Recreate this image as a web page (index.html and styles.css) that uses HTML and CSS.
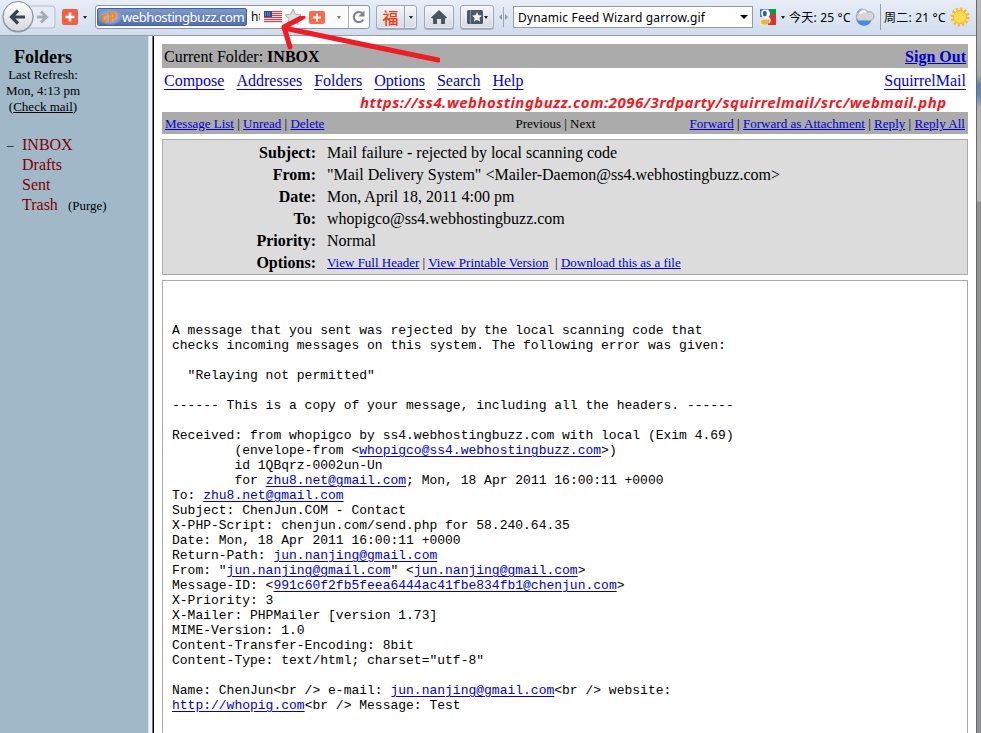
FILE: index.html
```html
<!DOCTYPE html>
<html lang="en">
<head>
<meta charset="utf-8">
<title>SquirrelMail</title>
<link rel="stylesheet" href="styles.css">
</head>
<body>
<div class="window">
<header class="toolbar">
  <svg class="nav" width="57" height="35" viewBox="0 0 57 35">
    <defs><linearGradient id="g" x1="0" y1="0" x2="0" y2="1"><stop offset="0" stop-color="#fff"/><stop offset="1" stop-color="#d3d7df"/></linearGradient></defs>
    <rect x="25" y="6" width="30" height="22" rx="3" fill="#e5ebf4" stroke="#b5bdca"/>
    <path d="M37 17h9M41 11.500l5.500 5.500-5.500 5.500" fill="none" stroke="#a4aebb" stroke-width="3"/>
    <circle cx="18" cy="17" r="15.500" fill="#50555c" opacity=".5"/>
    <circle cx="18" cy="16.500" r="15" fill="url(#g)" stroke="#858c97"/>
    <path d="M12 17h13M18 10.500L11.500 17l6.500 6.500" fill="none" stroke="#38444e" stroke-width="3.200"/>
  </svg>
  <svg class="plus" width="16" height="16" viewBox="0 0 16 16"><rect width="16" height="16" rx="2" fill="#f35f43"/><path d="M8 3.500v9M3.500 8h9" stroke="#fff" stroke-width="2.500"/></svg>
  <i class="caret c1"></i>
  <div class="url">
    <div class="identity"><b>cP</b><span>webhostingbuzz.com</span></div>
    <span class="ht">ht</span>
    <svg class="flag" width="18" height="12" viewBox="0 0 18 12"><rect width="18" height="12" fill="#f5dede"/><path d="M0 .5h18M0 2.500h18M0 4.500h18M0 6.500h18M0 8.500h18M0 10.500h18" stroke="#cf414b"/><rect width="8" height="6" fill="#2c4ba6"/><path d="M1 2h6M1 4h6" stroke="#9aace0" stroke-dasharray="1 1"/></svg>
    <svg class="star" width="18" height="18" viewBox="0 0 18 18"><path d="M9 1l2.400 5.200 5.600.6-4.100 3.900 1.100 5.800L9 13.700l-5 2.800 1.100-5.800L1 6.800l5.600-.6z" fill="#e2e2e2" stroke="#aaa"/></svg>
    <svg class="plus2" width="16" height="13" viewBox="0 0 16 13"><rect width="16" height="13" rx="2" fill="#fc6a49"/><path d="M8 2.500v8M4 6.500h8" stroke="#fff" stroke-width="2"/></svg>
    <i class="caret c2"></i>
    <div class="reload"><svg width="14" height="14" viewBox="0 0 14 14"><path d="M11.200 9.500A5 5 0 1 1 10 3.200" fill="none" stroke="#7b838d" stroke-width="2"/><path d="M12.500.5v6h-6z" fill="#7b838d"/></svg></div>
  </div>
  <div class="btn fu"><span>福</span><div class="drop"><i class="caret"></i></div></div>
  <div class="btn home"><svg width="16" height="14" viewBox="0 0 16 14"><path d="M8 0l8 7.500-1.200 1.200L14 8v6h-4V9H6v5H2V8l-.8.700L0 7.500z" fill="#4b565f"/></svg></div>
  <div class="btn marks"><svg width="16" height="14" viewBox="0 0 16 14"><rect width="16" height="14" rx="1.500" fill="#4b5865"/><path d="M3.500 0v14" stroke="#82909b"/><path d="M10 2l1.500 3.200 3.400.4-2.500 2.300.7 3.600-3.100-1.800-3 1.800.7-3.600-2.600-2.300 3.400-.4z" fill="#fff"/></svg><i class="caret"></i></div>
  <svg class="split" width="9" height="20" viewBox="0 0 9 20"><path d="M4.500 0v20" stroke="#a0a6b0"/><path d="M3 7v6L0 10zM6 7v6l3-3z" fill="#8f98a4"/></svg>
  <div class="select"><span>Dynamic Feed Wizard garrow.gif</span><i class="caret big"></i></div>
  <svg class="google" width="16" height="16" viewBox="0 0 16 16"><path fill="#3f78dc" d="M0 0h9v9H0z"/><path fill="#0a9b40" d="M9 0h7v6H9z"/><path fill="#e42e2b" d="M8 6l8-1v11H8z"/><path fill="#dfe8f8" d="M0 8h8v8H0z"/><path d="M7 1q4 4 0 7q4 2 2 6" fill="none" stroke="#fff" stroke-width="2"/><ellipse cx="5" cy="4.500" rx="3.800" ry="4" fill="#fff"/><ellipse cx="4.800" cy="4.500" rx="2" ry="2.700" fill="#235ac3"/><ellipse cx="5" cy="13" rx="4" ry="2.500" fill="#f9b718"/></svg>
  <i class="caret c3"></i>
  <span class="weather today">今天: 25 °C</span>
  <svg class="cloud" width="20" height="20" viewBox="0 0 20 20"><circle cx="9" cy="11" r="7.800" fill="#3f8bee"/><path d="M8 1Q2 2 1 8q2-4 7-7z" fill="#6ba2e9"/><path d="M3.500 13.500a4 4 0 0 1-.5-7 5.500 5 0 0 1 10-1.500 4.400 4.400 0 0 1 3 8.500z" fill="#d4d5d7" stroke="#a3a6aa"/><path d="M5 7q2-4 6-2" stroke="#f7f7f7" stroke-width="2" fill="none"/></svg>
  <i class="divider"></i>
  <span class="weather tuesday">周二: 21 °C</span>
  <svg class="sun" width="20" height="20" viewBox="0 0 20 20"><circle cx="10" cy="10" r="7.800" fill="none" stroke="#f5b929" stroke-width="3.500" stroke-dasharray="2 2.084"/><circle cx="10" cy="10" r="6.500" fill="#ffdc4e" stroke="#f3b22b"/></svg>
</header>
<div class="frames">
  <aside class="sidebar">
    <div class="summary">
      <h2>Folders</h2>
      <p>Last Refresh:<br>Mon, 4:13 pm<br>(<u>Check mail</u>)</p>
    </div>
    <ul>
      <li><span class="dash">–</span>INBOX</li><li>Drafts</li><li>Sent</li><li>Trash <small>(Purge)</small></li>
    </ul>
  </aside>
  <main>
    <div class="bar current"><span>Current Folder: <b>INBOX</b></span><a class="out">Sign Out</a></div>
    <nav><a>Compose</a><a>Addresses</a><a>Folders</a><a>Options</a><a>Search</a><a>Help</a><a class="brand">SquirrelMail</a></nav>
    <div class="bar actions"><span><a>Message List</a> | <a>Unread</a> | <a>Delete</a></span><span class="pager">Previous | Next</span><span class="right"><a>Forward</a> | <a>Forward as Attachment</a> | <a>Reply</a> | <a>Reply All</a></span></div>
    <dl class="headers">
      <dt>Subject:</dt><dd>Mail failure - rejected by local scanning code</dd>
      <dt>From:</dt><dd>"Mail Delivery System" &lt;Mailer-Daemon@ss4.webhostingbuzz.com&gt;</dd>
      <dt>Date:</dt><dd>Mon, April 18, 2011 4:00 pm</dd>
      <dt>To:</dt><dd>whopigco@ss4.webhostingbuzz.com</dd>
      <dt>Priority:</dt><dd>Normal</dd>
      <dt>Options:</dt><dd class="small"><a>View Full Header</a> | <a>View Printable Version</a> &nbsp;| <a>Download this as a file</a></dd>
    </dl>
<pre class="message">A message that you sent was rejected by the local scanning code that
checks incoming messages on this system. The following error was given:

  "Relaying not permitted"

------ This is a copy of your message, including all the headers. ------

Received: from whopigco by ss4.webhostingbuzz.com with local (Exim 4.69)
        (envelope-from &lt;<a>whopigco@ss4.webhostingbuzz.com</a>&gt;)
        id 1QBqrz-0002un-Un
        for <a>zhu8.net@gmail.com</a>; Mon, 18 Apr 2011 16:00:11 +0000
To: <a>zhu8.net@gmail.com</a>
Subject: ChenJun.COM - Contact
X-PHP-Script: chenjun.com/send.php for 58.240.64.35
Date: Mon, 18 Apr 2011 16:00:11 +0000
Return-Path: <a>jun.nanjing@gmail.com</a>
From: "<a>jun.nanjing@gmail.com</a>" &lt;<a>jun.nanjing@gmail.com</a>&gt;
Message-ID: &lt;<a>991c60f2fb5feea6444ac41fbe834fb1@chenjun.com</a>&gt;
X-Priority: 3
X-Mailer: PHPMailer [version 1.73]
MIME-Version: 1.0
Content-Transfer-Encoding: 8bit
Content-Type: text/html; charset="utf-8"

Name: ChenJun&lt;br /&gt; e-mail: <a>jun.nanjing@gmail.com</a>&lt;br /&gt; website:
<a>http://whopig.com</a>&lt;br /&gt; Message: Test</pre>
  </main>
</div>
</div>
<div class="edge"></div>
<svg class="arrow" width="180" height="50" viewBox="0 0 180 50"><path d="M178 44L24 12M43 1L24 11L30 31" fill="none" stroke="#ee1c24" stroke-width="5" stroke-linecap="round" stroke-linejoin="round"/></svg>
<div class="note">https://ss4.webhostingbuzz.com:2096/3rdparty/squirrelmail/src/webmail.php</div>
</body>
</html>
```
FILE: styles.css
```css
* { box-sizing: border-box; }
body { margin: 0; height: 733px; display: flex; overflow: hidden; background: #fff; color: #000; font: 16px/20px "Liberation Serif", serif; }
.window { width: 976px; height: 733px; display: flex; flex-direction: column; }
.edge { width: 5px; border-left: 1px solid #686868; background: linear-gradient(#b6babd 0, #aaa 75px, #5f82ab 85px, #6388b5 95px, #b2b2b2 108px, #bbb 200px, #bbb 201px, #929292 202px, #8e9293 100%); }
svg { display: block; flex: none; }

.toolbar { height: 36px; flex: none; display: flex; align-items: flex-start; background: linear-gradient(#e8eef7, #d0dced); border-bottom: 1px solid #979da6; font-family: "Noto Sans", "Noto Sans CJK SC", sans-serif; }
.caret { flex: none; width: 0; height: 0; border: 2.5px solid transparent; border-top: 3px solid #222; border-bottom: 0; }
.plus { margin: 9px 0 0 5px; }
.c1 { margin: 16px 8px 0 5px; }
.url { width: 275px; height: 24px; margin-top: 5px; display: flex; align-items: center; background: #f9fbfd; border: 1px solid #8d96a3; border-radius: 3px; flex: none; }
.identity { width: 150px; height: 18px; margin-left: 1px; display: flex; align-items: center; color: #fff; background: linear-gradient(#7d98cb, #5570a8); border: 1px solid #45619b; border-radius: 2px; font-size: 13px; line-height: 16px; white-space: nowrap; flex: none; }
.identity b { width: 24px; flex: none; padding-left: 3px; color: #ff8a14; font: 800 14px/16px "Open Sans", sans-serif; background: radial-gradient(#a9bbdc 0, #8ba2cd 50%, transparent 75%); }
.identity span { font-size: 13px; letter-spacing: -.42px; }
.ht { width: 9px; margin-left: 4px; overflow: hidden; font-size: 12px; line-height: 18px; flex: none; }
.flag { margin-left: 4px; }
.star { margin-left: 2px; }
.plus2 { margin-left: 7px; }
.c2 { margin-left: 12px; border-top-color: #777; }
.reload { margin-left: auto; width: 21px; height: 22px; border-left: 1px solid #a9b0bb; display: flex; align-items: center; padding-left: 3px; }
.btn { height: 24px; margin-top: 5px; display: flex; align-items: center; justify-content: center; border: 1px solid #9ea7b5; border-radius: 3px; background: linear-gradient(#f4f6fa, #d5dbe5); box-shadow: inset 0 0 0 1px #f5f7fb80, 0 1px 0 #aab2bf; flex: none; }
.fu { width: 41px; margin-left: 6px; }
.fu span { width: 27px; text-align: center; color: #f13c0e; font: 500 16px/22px "Noto Sans CJK SC", sans-serif; }
.drop { height: 22px; width: 12px; border-left: 1px solid #9ea7b5; display: flex; align-items: center; justify-content: center; }
.home { width: 30px; margin-left: 7px; }
.marks { width: 34px; margin-left: 6px; gap: 1px; }
.split { margin: 7px 0 0 5px; }
.select { width: 240px; height: 22px; margin: 6px 0 0 5px; border: 1px solid #959ba4; background: #fff; display: flex; align-items: center; justify-content: space-between; padding: 0 4px; font-size: 12px; line-height: 20px; letter-spacing: .17px; flex: none; white-space: nowrap; }
.select span { position: relative; top: 1px; }
.big { border-width: 4px 4px 0; border-top-color: #000; }
.google { margin: 9px 0 0 7px; }
.c3 { margin: 16px 0 0 5px; }
.weather { font-size: 12px; line-height: 22px; letter-spacing: .2px; margin-top: 7px; white-space: nowrap; flex: none; }
.today { width: 62px; margin-left: 4px; }
.cloud { margin: 7px 0 0 4px; }
.divider { width: 1px; height: 26px; margin: 4px 3px 0 5px; background: #979da8; flex: none; }
.tuesday { width: 62px; }
.sun { margin: 7px 0 0 4px; }

.frames { flex: 1; display: flex; min-height: 0; }
.sidebar { width: 154px; flex: none; background: #a0b8c8; border-right: 1px solid #000; box-shadow: inset -1px 0 #777, inset -4px 0 #f4f4f4, inset -5px 0 #d5dde3; padding-top: 11px; }
.summary { width: 86px; text-align: center; }
h2 { margin: 0; font-size: 18px; line-height: 20px; }
p { margin: 0; font-size: 13px; line-height: 16px; }
.sidebar ul { list-style: none; margin: 20px 0 0; padding: 0 0 0 22px; color: #800000; }
.sidebar li { height: 20px; display: flex; line-height: 20px; }
.dash { width: 15px; margin-left: -15px; color: #000; font-size: 13px; }
.sidebar small { margin-left: 10px; color: #000; font-size: 13px; line-height: 22px; }
main { flex: 1; min-width: 0; padding: 8px 8px 0 8px; display: flex; flex-direction: column; }
a { color: #00c; text-decoration: underline; }
.bar { display: flex; justify-content: space-between; background: #ababab; padding: 0 2px; flex: none; }
.current { height: 24px; line-height: 26px; }
.out { font-weight: bold; }
nav { display: flex; gap: 12px; height: 44px; padding: 3px 2px 0; line-height: 20px; }
nav a { text-underline-offset: 3px; }
.brand { margin-left: auto; }
.actions { height: 22px; line-height: 24px; font-size: 13px; padding: 0 3px; }
.actions span { white-space: nowrap; }
.actions .pager { margin-left: 97px; }
.actions .right { letter-spacing: .03px; }
.headers { margin: 5px 0 0; height: 136px; border: 1px solid #ababab; background: #dcdcdc; display: grid; grid-template-columns: 153px 1fr; grid-auto-rows: 22px; column-gap: 11px; padding-top: 2px; line-height: 22px; flex: none; }
dt { text-align: right; font-weight: bold; }
dd { margin: 0; white-space: nowrap; }
.small { font-size: 13px; }
.message { margin: 5px 0 0; padding: 42px 9px 0; flex: 1; border: 1px solid #ababab; border-bottom: 0; font: 13px/15px "Liberation Mono", monospace; }
.message a { text-underline-offset: 2px; }

.arrow { position: absolute; left: 260px; top: 16px; }
.note { position: absolute; left: 360px; top: 92px; color: #ee1c24; font: italic bold 15px/20px "Noto Sans", sans-serif; letter-spacing: .47px; white-space: nowrap; }
```
